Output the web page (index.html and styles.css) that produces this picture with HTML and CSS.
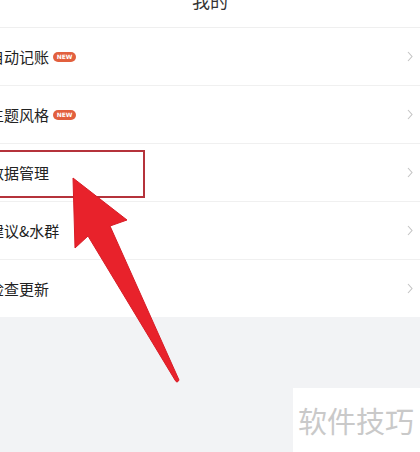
FILE: index.html
```html
<!DOCTYPE html>
<html lang="zh">
<head>
<meta charset="utf-8">
<link rel="stylesheet" href="styles.css">
</head>
<body>
<div class="page">
  <div class="header"><span class="title">我的</span></div>
  <div class="list">
    <div class="row"><span class="label">自动记账</span><span class="badge">NEW</span><span class="chev"><svg width="6" height="11" viewBox="0 0 6 11"><path d="M1 1 L5 5.5 L1 10" fill="none" stroke="#c4c4c4" stroke-width="1.1"/></svg></span></div>
    <div class="row"><span class="label">主题风格</span><span class="badge">NEW</span><span class="chev"><svg width="6" height="11" viewBox="0 0 6 11"><path d="M1 1 L5 5.5 L1 10" fill="none" stroke="#c4c4c4" stroke-width="1.1"/></svg></span></div>
    <div class="row"><span class="label">数据管理</span><span class="chev"><svg width="6" height="11" viewBox="0 0 6 11"><path d="M1 1 L5 5.5 L1 10" fill="none" stroke="#c4c4c4" stroke-width="1.1"/></svg></span></div>
    <div class="row"><span class="label">建议&amp;水群</span><span class="chev"><svg width="6" height="11" viewBox="0 0 6 11"><path d="M1 1 L5 5.5 L1 10" fill="none" stroke="#c4c4c4" stroke-width="1.1"/></svg></span></div>
    <div class="row last"><span class="label">检查更新</span><span class="chev"><svg width="6" height="11" viewBox="0 0 6 11"><path d="M1 1 L5 5.5 L1 10" fill="none" stroke="#c4c4c4" stroke-width="1.1"/></svg></span></div>
  </div>
  <div class="highlight"></div>
  <svg class="arrow" width="420" height="452" viewBox="0 0 420 452">
    <path d="M73 178 L127 220 L110 226 L179 380 Q177 384 175 380 L88 236 L75 248 Z" fill="#e8222b" stroke="#d81c26" stroke-width="1" stroke-linejoin="round"/>
  </svg>
  <div class="watermark">软件技巧</div>
</div>
</body>
</html>
```
FILE: styles.css
```css
html, body {
  margin: 0;
  padding: 0;
}
body {
  background: #f2f3f5;
  font-family: "Noto Sans CJK SC", "Noto Sans", sans-serif;
  color: #222;
}
.page {
  position: relative;
  width: 420px;
  height: 452px;
  overflow: hidden;
}
.header {
  height: 27px;
  background: #fff;
  border-bottom: 1px solid #efefef;
  display: flex;
  justify-content: center;
  overflow: hidden;
}
.title {
  font-size: 18px;
  line-height: 18px;
  margin-top: -9px;
  color: #333;
}
.list {
  background: #fff;
}
.row {
  height: 57px;
  border-bottom: 1px solid #f0f0f0;
  display: flex;
  align-items: center;
  padding-right: 7px;
}
.row.last {
  border-bottom: none;
}
.label {
  font-size: 15px;
  margin-left: -11px;
  white-space: nowrap;
}
.badge {
  margin-left: 4px;
  width: 23px;
  height: 10px;
  border-radius: 5px;
  background: #e2603e;
  color: #fff;
  font-family: "DejaVu Sans", sans-serif;
  font-size: 6px;
  font-weight: bold;
  line-height: 10px;
  text-align: center;
}
.chev {
  margin-left: auto;
  display: flex;
}
.highlight {
  position: absolute;
  left: -5px;
  top: 150px;
  width: 146px;
  height: 44px;
  border: 2px solid #b5333b;
}
.arrow {
  position: absolute;
  left: 0;
  top: 0;
}
.watermark {
  position: absolute;
  left: 293px;
  top: 388px;
  right: 0;
  bottom: 0;
  background: #fff;
  color: #c9c9c9;
  font-size: 29px;
  line-height: 29px;
  padding: 18px 0 0 5px;
  white-space: nowrap;
}
```
